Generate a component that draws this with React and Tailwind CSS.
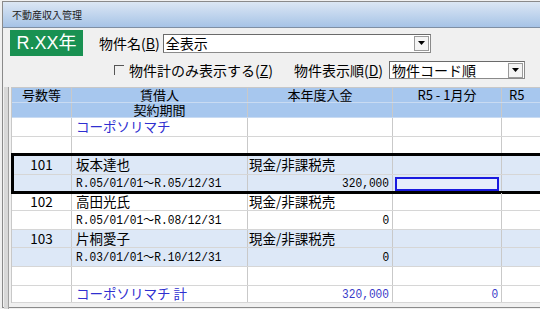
import React from "react";

const F = { fontFamily: '"Noto Sans CJK JP", "Noto Sans", sans-serif' };
const M = { fontFamily: '"Liberation Mono", "Noto Sans CJK JP", monospace', fontSize: "13px" };

function Mono({ children, right, className = "" }) {
  return (
    <span style={M} className={`inline-block ${right ? "ml-auto pr-[3px] origin-right" : "origin-left"} scale-x-[0.86] ${className}`}>
      {children}
    </span>
  );
}

function Arrow() {
  return (
    <div className="w-[15px] h-[15px] border border-[#9a9a9a] bg-[#f4f4f4] flex items-center justify-center">
      <svg width="7" height="4" viewBox="0 0 7 4"><path d="M0 0H7L3.5 4Z" fill="#000" /></svg>
    </div>
  );
}

function Cell({ w, children, className = "" }) {
  return (
    <div className={`shrink-0 h-full border-r border-[#c9c9c9] flex items-center overflow-hidden whitespace-nowrap ${className}`} style={{ width: w }}>
      {children}
    </div>
  );
}

const W = [60, 176, 145, 109, 60];

function Row({ h, bg = "bg-white", c1, c2, c3, c4, sel }) {
  return (
    <div className={`flex border-b border-[#d6d6d6] leading-none ${bg}`} style={{ height: h }}>
      <Cell w={W[0]} className="justify-center">{c1}</Cell>
      <Cell w={W[1]} className="pl-[4px]">{c2}</Cell>
      <Cell w={W[2]}>{c3}</Cell>
      <Cell w={W[3]} className="relative">
        {sel && <div className="absolute left-[2px] right-[2px] top-[2px] bottom-[1px] border-2 border-[#1a1adf] bg-[#e6eefb]" />}
        {c4}
      </Cell>
      <Cell w={W[4]} />
    </div>
  );
}

export default function App() {
  return (
    <div className="w-[540px] h-[309px] bg-[#f0f0f0] overflow-hidden relative text-[13.5px] text-black" style={F}>
      {/* window frame */}
      <div className="absolute left-[2px] top-[1px] w-[600px] h-[307px] border border-[#8a8a8a]" />
      {/* title bar */}
      <div className="ml-[3px] mt-[2px] h-[26px] bg-gradient-to-b from-[#dce7f4] to-[#a6c3e6] border-b border-[#7f8fa3] flex items-center pl-[9px]">
        <span className="text-[10px] leading-none text-[#222]">不動産収入管理</span>
      </div>
      {/* toolbar row 1 */}
      <div className="flex items-center h-[30px] pl-[10px]">
        <div className="w-[73px] h-[26px] bg-[#199152] text-white flex items-center justify-center text-[18px] leading-none" style={{ fontFamily: '"Liberation Sans", "Noto Sans CJK JP", sans-serif' }}>R.XX年</div>
        <span className="ml-[16px] text-[14px]">物件名(<u>B</u>)</span>
        <div className="ml-[3px] w-[268px] h-[19px] bg-white border border-[#8a8a8a] border-t-[#6a6a6a] border-l-[#6a6a6a] flex items-center justify-between pr-[1px]">
          <span className="pl-[2px] leading-none text-[14px]">全表示</span>
          <Arrow />
        </div>
      </div>
      {/* toolbar row 2 */}
      <div className="flex items-center h-[24px] pl-[114px] text-[14px]">
        <div className="w-[10px] h-[10px] border-t border-l border-[#555] bg-[#f0f0f0]" />
        <span className="ml-[5px]">物件計のみ表示する(<u>Z</u>)</span>
        <span className="ml-[21px]">物件表示順(<u>D</u>)</span>
        <div className="ml-[6px] w-[136px] h-[18px] bg-white border border-[#8a8a8a] border-t-[#6a6a6a] border-l-[#6a6a6a] flex items-center justify-between pr-[1px]">
          <span className="pl-[2px] leading-none">物件コード順</span>
          <Arrow />
        </div>
      </div>
      {/* table area */}
      <div className="absolute left-[4px] top-[87px] w-[540px] h-[222px] border-l-4 border-[#d8d8d8]">
        <div className="border-l border-[#a0a0a0] pl-[2px] h-full">
          <div className="border-l border-[#c8c8c8] relative">
            {/* header */}
            <div className="bg-[#a7c7ee] border-t border-[#c8c8c8] text-[13px] leading-[14px]">
              <div className="flex h-[15px] border-b border-[#c9dbf2]">
                <Cell w={W[0]} className="justify-center">号数等</Cell>
                <Cell w={W[1]} className="justify-center">賃借人</Cell>
                <Cell w={W[2]} className="justify-center">本年度入金</Cell>
                <Cell w={W[3]} className="justify-center">R5 - 1月分</Cell>
                <Cell w={W[4]} className="pl-[7px]">R5</Cell>
              </div>
              <div className="flex h-[15px] border-b border-[#c9dbf2]">
                <Cell w={W[0]} />
                <Cell w={W[1]} className="justify-center">契約期間</Cell>
                <Cell w={W[2]} />
                <Cell w={W[3]} />
                <Cell w={W[4]} />
              </div>
            </div>
            <Row h={19} c2={<span className="text-[#2f2fd0]">コーポソリマチ</span>} />
            <Row h={18} />
            <div className="relative">
              <Row h={20} bg="bg-[#dde8f7]" c1="101" c2="坂本達也" c3={<span className="pl-[1px]">現金/非課税売</span>} />
              <Row h={18} bg="bg-[#dde8f7]" c2={<Mono>R.05/01/01～R.05/12/31</Mono>} c3={<Mono right>320,000</Mono>} sel />
              <div className="absolute -left-[1px] top-[-2px] w-[560px] bottom-[-1px] border-[3px] border-black pointer-events-none" />
            </div>
            <Row h={18} c1="102" c2="高田光氏" c3={<span className="pl-[1px]">現金/非課税売</span>} />
            <Row h={19} c2={<Mono>R.05/01/01～R.08/12/31</Mono>} c3={<Mono right>0</Mono>} />
            <Row h={18} bg="bg-[#dde8f7]" c1="103" c2="片桐愛子" c3={<span className="pl-[1px]">現金/非課税売</span>} />
            <Row h={19} bg="bg-[#dde8f7]" c2={<Mono>R.03/01/01～R.10/12/31</Mono>} c3={<Mono right>0</Mono>} />
            <Row h={19} />
            <Row h={17} c2={<span className="text-[#2f2fd0]">コーポソリマチ 計</span>} c3={<Mono right className="text-[#3a3ac8]">320,000</Mono>} c4={<Mono right className="text-[#3a3ac8]">0</Mono>} />
          </div>
        </div>
      </div>
    </div>
  );
}
